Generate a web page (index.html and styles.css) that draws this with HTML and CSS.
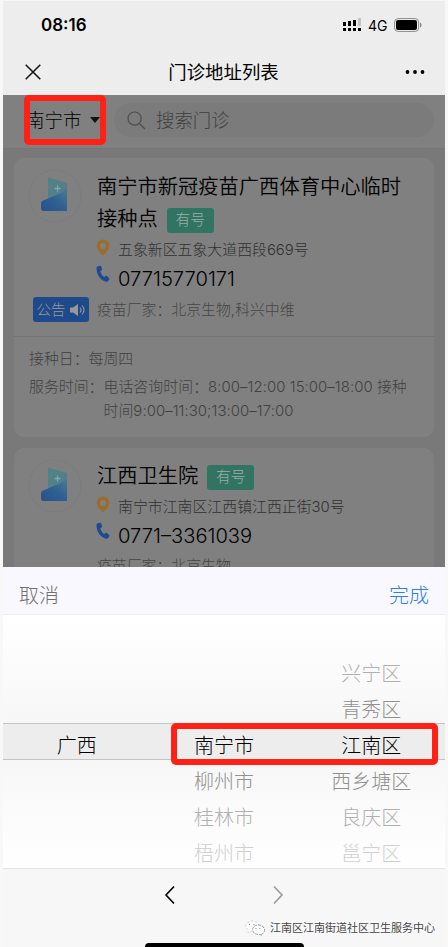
FILE: index.html
```html
<!DOCTYPE html>
<html lang="zh-CN">
<head>
<meta charset="utf-8">
<title>门诊地址列表</title>
<link rel="stylesheet" href="styles.css">
</head>
<body>
<svg width="0" height="0" class="defs">
  <defs>
    <linearGradient id="gTop" x1="0" y1="0" x2="1" y2="1"><stop offset="0" stop-color="#508487"/><stop offset="1" stop-color="#547b8e"/></linearGradient>
    <linearGradient id="gLow" x1="1" y1="0" x2="0" y2="1"><stop offset="0" stop-color="#4a7c94"/><stop offset=".5" stop-color="#2f5f92"/><stop offset="1" stop-color="#28518b"/></linearGradient>
    <symbol id="logo" viewBox="0 0 54 54">
      <circle cx="27" cy="27" r="26" fill="none" stroke="#7a7c80"/>
      <path d="M20 8.500 39 14V42H20z" fill="url(#gTop)"/>
      <path d="M14 32 32 24.500 39 20V42H14.500L13 40V34z" fill="url(#gLow)"/>
      <path d="M29.500 16.500v6M26.500 19.500h6" stroke="#84a6aa" stroke-width="1.300" fill="none"/>
    </symbol>
    <symbol id="pin" viewBox="0 0 14 17"><path fill-rule="evenodd" d="M7 .5a6.400 6.400 0 0 1 6.400 6.400c0 3.500-3.500 6.800-6.400 9.600C4.100 13.700.6 10.400.6 6.900A6.400 6.400 0 0 1 7 .5zm0 3.400a3 3 0 1 0 0 6 3 3 0 0 0 0-6z" fill="#9a6c2e"/></symbol>
    <symbol id="tel" viewBox="0 0 14 18"><path d="M1.300 1.600 3.600.7c.7-.2 1.300 0 1.600.7l.8 2.500c.2.700 0 1.200-.5 1.500l-1.200.8c.6 2.300 2 4.500 3.800 5.700l1.500-.9c.5-.3 1-.2 1.500.2l2 1.800c.5.500.5 1.100.1 1.700l-1.100 1.400c-.4.500-1 .7-1.600.6C5 15.900.6 10.200.5 3.300c0-.8.2-1.400.8-1.700z" fill="#1d4a91"/></symbol>
  </defs>
</svg>
<div class="phone">
  <header class="status">
    <span class="clock">08:16</span>
    <svg class="signal" width="19" height="14" viewBox="0 0 19 14"><path d="M0 4h3v4H0zM5 3h3v5H5zM10 2h3v6h-3zM0 10h3v3H0zM5 10h3v3H5zM10 10h3v3h-3zM15 10h3v3h-3z"/><path d="M15 0h3v8h-3z" fill="#c4c4c4"/></svg>
    <span class="net">4G</span>
    <svg class="battery" width="28" height="14" viewBox="0 0 28 14"><rect x=".6" y=".6" width="24" height="12.800" rx="3.500" fill="#f4f4f4" stroke="#888"/><rect x="2" y="2" width="21" height="10" rx="2"/><path d="M26 4.500c2 .5 2 4.500 0 5z" fill="#888"/></svg>
  </header>
  <div class="nav">
    <svg width="16" height="16" viewBox="0 0 16 16"><path d="M.7.700 15.300 15.300M15.300.7.700 15.300" stroke="#111" stroke-width="1.500" fill="none"/></svg>
    <h1>门诊地址列表</h1>
    <svg width="20" height="6" viewBox="0 0 20 6"><circle cx="2.500" cy="3" r="1.900"/><circle cx="10" cy="3" r="1.900"/><circle cx="17.500" cy="3" r="1.900"/></svg>
  </div>
  <main class="page">
    <div class="filter">
      <div class="city"><span>南宁市</span><i class="caret"></i><b class="mark"></b></div>
      <div class="search">
        <svg width="19" height="19" viewBox="0 0 19 19"><circle cx="7.600" cy="7.600" r="6.600"/><path d="m12.300 12.300 5.700 5.700"/></svg>
        <span>搜索门诊</span>
      </div>
    </div>
    <section class="card">
      <div class="info">
        <div class="side">
          <svg class="logo"><use href="#logo"/></svg>
          <div class="notice">公告<svg width="16" height="14" viewBox="0 0 16 14"><path d="M0 4.500h3L8 1v12L3 9.500H0z" fill="#999"/><path d="M10 4.500q2 2.500 0 5M12 2.500q4 4.500 0 9" stroke="#999" stroke-width="1.100" fill="none"/></svg></div>
        </div>
        <div class="detail">
          <h2>南宁市新冠疫苗广西体育中心临时接种点<span class="tag">有号</span></h2>
          <p class="addr"><svg><use href="#pin"/></svg>五象新区五象大道西段669号</p>
          <p class="phone-no"><svg><use href="#tel"/></svg>07715770171</p>
          <p class="maker">疫苗厂家：北京生物,科兴中维</p>
        </div>
      </div>
      <div class="hours">
        <p><span class="day">接种日：</span><span>每周四</span></p>
        <p><span>服务时间：</span><span class="time">电话咨询时间：8:00–12:00 15:00–18:00 接种<br>时间9:00–11:30;13:00–17:00</span></p>
      </div>
    </section>
    <section class="card">
      <div class="info">
        <div class="side"><svg class="logo"><use href="#logo"/></svg></div>
        <div class="detail second">
          <h2>江西卫生院<span class="tag">有号</span></h2>
          <p class="addr"><svg><use href="#pin"/></svg>南宁市江南区江西镇江西正街30号</p>
          <p class="phone-no"><svg><use href="#tel"/></svg>0771–3361039</p>
          <p class="maker">疫苗厂家：北京生物</p>
        </div>
      </div>
    </section>
  </main>
  <section class="sheet">
    <div class="actions"><span>取消</span><span class="done">完成</span></div>
    <div class="picker">
      <div class="band"></div>
      <ul><li></li><li></li><li class="on">广西</li><li></li><li></li><li></li></ul>
      <ul><li></li><li></li><li class="on">南宁市</li><li class="n1">柳州市</li><li class="n2">桂林市</li><li class="n3">梧州市</li></ul>
      <ul><li class="n2">兴宁区</li><li class="n1">青秀区</li><li class="on">江南区</li><li class="n1">西乡塘区</li><li class="n2">良庆区</li><li class="n3">邕宁区</li></ul>
      <b class="mark"></b>
    </div>
  </section>
  <footer class="browser">
    <div class="arrows">
      <svg width="12" height="20" viewBox="0 0 12 20"><path d="M10 1.500 2 10l8 8.500"/></svg>
      <svg class="off" width="12" height="20" viewBox="0 0 12 20"><path d="m2 1.500 8 8.500-8 8.500"/></svg>
    </div>
    <div class="account">
      <svg width="20" height="16" viewBox="0 0 20 16"><path d="M7 11 3 13l.5-3C-2 6 2 1 7 1c4 0 6 2 6.500 4" fill="#fff" stroke="#bbb" stroke-width=".7" stroke-dasharray="2 2"/><path d="M13 5c8 0 8 8 3.500 9l.5 1.500-2-1C5 15 6 5 13 5z" fill="#fff" stroke="#888" stroke-width=".8" stroke-dasharray="3 1"/><path d="M4.500 4v1M9 4v1M11 8v1M15 8v1" stroke="#888"/></svg>
      <span>江南区江南街道社区卫生服务中心</span>
    </div>
    <div class="home"></div>
  </footer>
</div>
</body>
</html>
```
FILE: styles.css
```css
* { box-sizing: border-box; margin: 0; padding: 0; }
body { width: 448px; height: 947px; overflow: hidden; background: #f8f8f8; font-family: Inter, "Noto Sans CJK SC", sans-serif; font-weight: 300; color: #000; }
svg { display: block; flex: none; }
.defs { position: absolute; }
.phone { width: 442px; height: 947px; margin-left: 3px; display: flex; flex-direction: column; overflow: hidden; }
.status { height: 49px; padding: 0 20px 0 38px; background: #ededed; display: flex; align-items: center; border-top: 1px solid #f6f6f6; }
.clock { font-size: 17px; font-weight: 600; flex: 1; }
.net { font-size: 14px; font-weight: 400; margin: 0 6px; width: 20px; }
.battery { margin-right: 3px; }
.nav { height: 46px; padding: 0 20px 0 22px; background: #ededed; display: flex; align-items: center; justify-content: space-between; }
.nav h1 { font-size: 18.400px; font-weight: 400; line-height: 28px; margin: 0 0 1px 1px; }
.page { height: 472px; overflow: hidden; background: #797979; flex: none; }
.filter { height: 54px; background: #808080; display: flex; align-items: center; padding: 0 11px 3px 24px; border-bottom: 1px solid #767676; }
.city { position: relative; width: 87px; display: flex; align-items: center; font-size: 18.500px; line-height: 28px; }
.caret { border: 5px solid transparent; border-top: 6px solid #111; border-bottom: 0; margin-left: 8px; }
.mark { position: absolute; border: 6px solid #ff2115; border-radius: 5px; }
.city .mark { left: -3px; top: -11px; width: 82px; height: 50px; }
.city span { margin-left: -1px; }
.search { flex: 1; height: 34px; border-radius: 17px; background: #7b7b7b; display: flex; align-items: center; padding-left: 13px; gap: 10px; font-size: 18.400px; line-height: 28px; color: #3f3f3f; }
.search svg { fill: none; stroke: #4d4d4d; stroke-width: 1.200; }
.card { width: 420px; margin: 11px 0 0 11px; border-radius: 10px; background: #808080; }
.card:first-of-type { margin-top: 9px; }
.info { display: flex; }
.side { width: 83px; padding: 11px 0 0 14px; }
.logo { width: 54px; height: 54px; }
.notice { width: 56px; height: 25px; margin: 74px 0 0 5px; border-radius: 3px; background: #1e498b; color: #999; font-size: 14.500px; line-height: 25px; display: flex; align-items: center; justify-content: center; gap: 4px; }
.detail { flex: 1; padding-top: 13px; }
.detail h2 { font-size: 20.280px; line-height: 32px; font-weight: 350; width: 310px; }
.tag { display: inline-block; width: 47px; height: 25px; margin-left: 9px; border-radius: 3px; background: #327462; color: #9ab0a8; font-size: 14.800px; line-height: 25px; text-align: center; vertical-align: 1px; font-weight: 300; }
.addr, .phone-no { display: flex; align-items: center; }
.addr { height: 27px; margin-top: 0; font-size: 14.900px; color: #303030; }
.addr svg { width: 14px; height: 17px; margin: -3px 8px 0 -1px; }
.phone-no { height: 28px; font-size: 20.150px; font-weight: 350; margin-top: 2px; }
.phone-no svg { width: 14px; height: 18px; margin: -8px 8px 0 -1px; }
.maker { font-size: 14.880px; line-height: 28px; margin-top: 4px; height: 40px; color: #454545; }
.second { padding-top: 12px; }
.second .maker { margin-top: 3px; }
.hours { border-top: 1px solid #747474; height: 101px; padding: 10px 0 0 15px; font-size: 14.900px; line-height: 24px; color: #414141; }
.hours p { display: flex; height: 28px; }
.hours .time { white-space: nowrap; letter-spacing: .06px; }
.sheet { height: 301px; flex: none; background: #fff; }
.actions { height: 48px; padding: 10px 16px 0 16px; border-bottom: 1px solid #eee; background: #faf8ff; display: flex; justify-content: space-between; align-items: center; font-size: 20px; line-height: 30px; color: #707070; }
.actions .done { color: #2680f0; }
.picker { position: relative; height: 253px; padding-top: 41px; background: linear-gradient(#fff, #f7f7f7 43%, #f7f7f7 57%, #fff); display: grid; grid-template-columns: repeat(3, 1fr); overflow: hidden; }
.picker ul { position: relative; list-style: none; text-align: center; font-size: 20px; }
.picker li { height: 36.100px; line-height: 36px; }
.picker .on { color: #000; }
.picker .n1 { color: #909090; }
.picker .n2 { color: #b0b0b0; }
.picker .n3 { color: #d0d0d0; }
.band { position: absolute; left: 0; right: 0; top: 108px; height: 37px; background: #ededed; border: 1px solid #c4c4c4; border-width: 1px 0; }
.picker .mark { left: 168px; top: 108px; width: 267px; height: 42px; }
.browser { height: 79px; flex: none; background: #f7f7f7; border-top: 1px solid #e4e4e4; }
.arrows { display: flex; justify-content: center; gap: 96px; padding: 16px 0 0 0; height: 49px; }
.arrows svg { fill: none; stroke: #000; stroke-width: 1.600; }
.arrows .off { stroke: #999; }
.account { display: flex; align-items: center; justify-content: flex-end; gap: 5px; height: 20px; padding-right: 10px; font-size: 11px; line-height: 20px; color: #444; font-weight: 400; white-space: nowrap; }
.account span { text-shadow: -1px -1px 0 #fff; }
.home { width: 159px; height: 9px; margin: 5px 0 0 142px; border-radius: 4px; background: #000; }
```
